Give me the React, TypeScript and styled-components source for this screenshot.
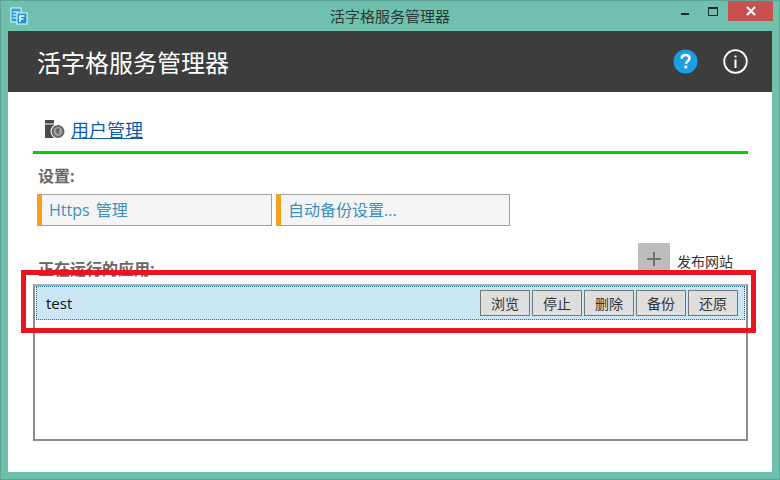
import React from "react";
import styled, { createGlobalStyle } from "styled-components";

const GlobalStyle = createGlobalStyle`
  html, body {
    margin: 0;
    padding: 0;
    background: #70c0ae;
  }
  body {
    font-family: "Open Sans", "Noto Sans CJK SC", sans-serif;
  }
`;

const Window = styled.div`
  position: relative;
  width: 780px;
  height: 480px;
  box-sizing: border-box;
  background: #70c0ae;
  border: 1px solid #5fa596;
  display: flex;
  flex-direction: column;
  overflow: hidden;
`;

const TitleBar = styled.div`
  height: 30px;
  flex: none;
  display: grid;
  grid-template-columns: 1fr auto 1fr;
  align-items: start;
`;

const AppIcon = styled.svg`
  width: 18px;
  height: 18px;
  margin: 6px 0 0 9px;
  display: block;
`;

const Title = styled.div`
  font-size: 15px;
  line-height: 30px;
  color: #2b3a37;
`;

const Controls = styled.div`
  display: flex;
  justify-content: flex-end;
  align-items: flex-start;
  margin-right: 6px;
`;

const ControlIcon = styled.svg`
  width: 27px;
  height: 20px;
  display: block;
`;

const CloseButton = styled.div`
  width: 45px;
  height: 20px;
  background: #c75050;
  display: flex;
  align-items: center;
  justify-content: center;
`;

const Content = styled.div`
  flex: 1;
  margin: 0 7px 7px;
  background: #fff;
  display: flex;
  flex-direction: column;
`;

const Header = styled.div`
  height: 61px;
  flex: none;
  background: #3d3d3d;
  display: flex;
  align-items: center;
  padding: 0 24px 0 29px;
`;

const HeaderTitle = styled.div`
  flex: 1;
  font-size: 24px;
  color: #fff;
`;

const HeaderIcons = styled.div`
  display: flex;
  align-items: center;
  gap: 25px;
`;

const HeaderIcon = styled.svg`
  width: 25px;
  height: 25px;
  display: block;
`;

const Body = styled.div`
  padding: 0 24px 0 25px;
  display: flex;
  flex-direction: column;
`;

const UserRow = styled.div`
  display: flex;
  align-items: center;
  height: 62px;
  padding: 22px 0 7px 11px;
  box-sizing: border-box;
  border-bottom: 3px solid #00d400;
  gap: 5px;
`;

const UserIcon = styled.svg`
  width: 22px;
  height: 20px;
  display: block;
`;

const UserLink = styled.a`
  font-size: 18px;
  color: #0b5cad;
  text-decoration: underline;
`;

const SectionLabel = styled.div`
  font-size: 16px;
  font-weight: 700;
  color: #666;
  line-height: 22px;
`;

const SettingsLabel = styled(SectionLabel)`
  margin: 11px 0 7px 5px;
`;

const SettingsRow = styled.div`
  display: flex;
  gap: 4px;
  margin-left: 4px;
`;

const SettingButton = styled.div<{ $width: number }>`
  width: ${({ $width }) => $width}px;
  height: 32px;
  box-sizing: border-box;
  background: #f4f4f4;
  border: 1px solid #a0a0a0;
  border-left: 5px solid #f7a11a;
  padding-left: 7px;
  font-size: 16px;
  word-spacing: 2px;
  line-height: 31px;
  color: #3d8fbe;
`;

const AppsHeader = styled.div`
  display: flex;
  align-items: flex-end;
  height: 49px;
  margin-top: 9px;
`;

const AppsLabel = styled(SectionLabel)`
  flex: 1;
  margin: 0 0 4px 5px;
`;

const PublishButton = styled.div`
  width: 32px;
  height: 31px;
  margin-bottom: 10px;
  background: #bdbdbd;
  display: flex;
  align-items: center;
  justify-content: center;
`;

const PublishLabel = styled.div`
  font-size: 14px;
  line-height: 20px;
  color: #333;
  margin: 0 15px 12px 7px;
`;

const AppList = styled.div`
  height: 157px;
  box-sizing: border-box;
  border: 2px solid #8c8c8c;
  border-top-color: #a6b0b8;
`;

const AppRow = styled.div`
  height: 34px;
  box-sizing: border-box;
  margin: 0 1px;
  background: #cbe6f5;
  border: 1px dotted #1b6d8a;
  display: flex;
  align-items: center;
  padding: 0 6px 0 9px;
`;

const AppName = styled.div`
  flex: 1;
  font-size: 15px;
  color: #111;
`;

const RowButtons = styled.div`
  display: flex;
  gap: 2px;
`;

const RowButton = styled.div`
  width: 50px;
  height: 26px;
  box-sizing: border-box;
  background: #dedede;
  border: 1px solid #777;
  font-size: 14px;
  line-height: 25px;
  text-align: center;
  color: #333;
`;

const Highlight = styled.div`
  position: absolute;
  left: 20px;
  top: 269px;
  width: 735px;
  height: 63px;
  box-sizing: border-box;
  border: 5px solid #e8141f;
  pointer-events: none;
`;

const rowActions = ["浏览", "停止", "删除", "备份", "还原"];

export default function App() {
  return (
    <Window>
      <GlobalStyle />
      <TitleBar>
        <AppIcon viewBox="0 0 18 18">
          <rect x="1" y="1" width="10" height="14" fill="#2a9fd8" stroke="#eaf8ff" />
          <path d="M3 5h6M3 8h6M3 11h4" stroke="#fff" strokeWidth="1" />
          <rect x="7" y="6" width="10" height="11" fill="#1594d2" stroke="#eaf8ff" />
          <path d="M10 15V9h4.5M10 12h3.5" stroke="#fff" strokeWidth="1.6" fill="none" />
        </AppIcon>
        <Title>活字格服务管理器</Title>
        <Controls>
          <ControlIcon viewBox="0 0 27 20">
            <rect x="7" y="12" width="8" height="2" fill="#1d2b28" />
          </ControlIcon>
          <ControlIcon viewBox="0 0 27 20">
            <rect x="7.5" y="6.5" width="9" height="8" fill="none" stroke="#1d2b28" />
            <rect x="7" y="6" width="10" height="2" fill="#1d2b28" />
          </ControlIcon>
          <CloseButton>
            <svg width="10" height="10" viewBox="0 0 10 10">
              <path d="M1 1l8 8M9 1l-8 8" stroke="#fff" strokeWidth="2" />
            </svg>
          </CloseButton>
        </Controls>
      </TitleBar>
      <Content>
        <Header>
          <HeaderTitle>活字格服务管理器</HeaderTitle>
          <HeaderIcons>
            <HeaderIcon viewBox="0 0 25 25">
              <circle cx="12.5" cy="12.5" r="12" fill="#1b9fe0" />
              <path
                d="M8.6 9.6c.2-2.4 1.9-3.6 4-3.6 2.3 0 3.9 1.3 3.9 3.3 0 1.6-1 2.4-2 3.1-.9.6-1.3 1.1-1.3 2.3"
                fill="none"
                stroke="#fff"
                strokeWidth="2.6"
              />
              <rect x="11.4" y="16.6" width="2.8" height="2.8" fill="#fff" />
            </HeaderIcon>
            <HeaderIcon viewBox="0 0 25 25">
              <circle cx="12.5" cy="12.5" r="11.3" fill="none" stroke="#fff" strokeWidth="1.8" />
              <rect x="11.5" y="10.5" width="2" height="8.5" fill="#fff" />
              <rect x="11.5" y="6.5" width="2" height="2" fill="#fff" />
            </HeaderIcon>
          </HeaderIcons>
        </Header>
        <Body>
          <UserRow>
            <UserIcon viewBox="0 0 22 20">
              <path d="M1 1h9v3.500H1zM1 5.500h9V19H1z" fill="#4a4a4a" />
              <circle cx="14" cy="12.500" r="7.500" fill="#fff" />
              <circle cx="14" cy="12.500" r="6.500" fill="#666" />
              <circle cx="14" cy="12.500" r="4.500" fill="#9aa0a0" />
              <path d="M11.500 11l2.500-2 2 1.500-1.500 2 1 2.500-3-1z" fill="#5c6668" />
            </UserIcon>
            <UserLink>用户管理</UserLink>
          </UserRow>
          <SettingsLabel>设置:</SettingsLabel>
          <SettingsRow>
            <SettingButton $width={235}>Https 管理</SettingButton>
            <SettingButton $width={234}>自动备份设置...</SettingButton>
          </SettingsRow>
          <AppsHeader>
            <AppsLabel>正在运行的应用:</AppsLabel>
            <PublishButton>
              <svg width="14" height="14" viewBox="0 0 14 14">
                <path d="M7 0v14M0 7h14" stroke="#707070" strokeWidth="2" />
              </svg>
            </PublishButton>
            <PublishLabel>发布网站</PublishLabel>
          </AppsHeader>
          <AppList>
            <AppRow>
              <AppName>test</AppName>
              <RowButtons>
                {rowActions.map((action) => (
                  <RowButton key={action}>{action}</RowButton>
                ))}
              </RowButtons>
            </AppRow>
          </AppList>
        </Body>
      </Content>
      <Highlight />
    </Window>
  );
}
